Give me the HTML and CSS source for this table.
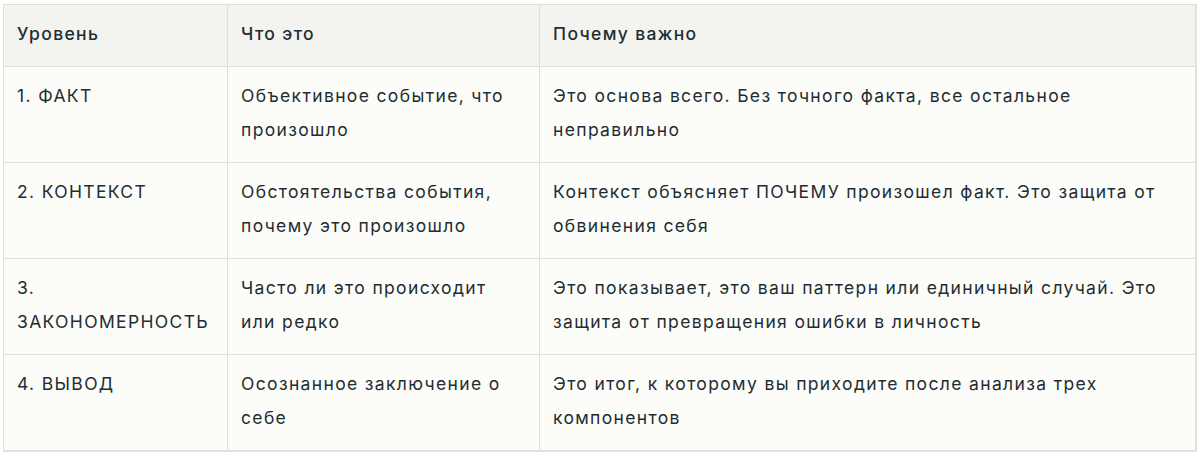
FILE: index.html
```html
<!DOCTYPE html>
<html lang="ru">
<head>
<meta charset="utf-8">
<link rel="stylesheet" href="styles.css">
</head>
<body>
<div class="wrap">
<table class="levels">
  <colgroup>
    <col class="c1"><col class="c2"><col class="c3">
  </colgroup>
  <thead>
    <tr><th>Уровень</th><th>Что это</th><th>Почему важно</th></tr>
  </thead>
  <tbody>
    <tr><td>1. ФАКТ</td><td>Объективное событие, что произошло</td><td>Это основа всего. Без точного факта, все остальное неправильно</td></tr>
    <tr><td>2. КОНТЕКСТ</td><td>Обстоятельства события, почему это произошло</td><td>Контекст объясняет ПОЧЕМУ произошел факт. Это защита от обвинения себя</td></tr>
    <tr><td>3. ЗАКОНОМЕРНОСТЬ</td><td>Часто ли это происходит или редко</td><td>Это показывает, это ваш паттерн или единичный случай. Это защита от превращения ошибки в личность</td></tr>
    <tr><td>4. ВЫВОД</td><td>Осознанное заключение о себе</td><td>Это итог, к которому вы приходите после анализа трех компонентов</td></tr>
  </tbody>
</table>
</div>
</body>
</html>
```
FILE: styles.css
```css
html, body {
  margin: 0;
  padding: 0;
  background: #ffffff;
}
body {
  padding: 4px 3px 4px 3px;
  font-family: Inter, "Noto Sans", sans-serif;
  color: #1e2d33;
}
.wrap {
  width: 1194px;
  border-right: 1px solid #e3e3df;
  border-bottom: 1px solid #e3e3df;
  box-sizing: border-box;
}
.levels {
  width: 1192px;
  border-collapse: collapse;
  table-layout: fixed;
  font-size: 17.5px;
  line-height: 34px;
  letter-spacing: 1.35px;
  background: #fcfcf9;
}
.c1 { width: 224px; }
.c2 { width: 312px; }
.c3 { width: 656px; }
.levels th, .levels td {
  border: 1px solid #dededa;
  padding: 12px 13px 15px 13px;
  text-align: left;
  vertical-align: top;
}
.levels th {
  background: #f3f3ef;
  font-weight: 500;
}
.levels td {
  font-weight: 400;
}
```
